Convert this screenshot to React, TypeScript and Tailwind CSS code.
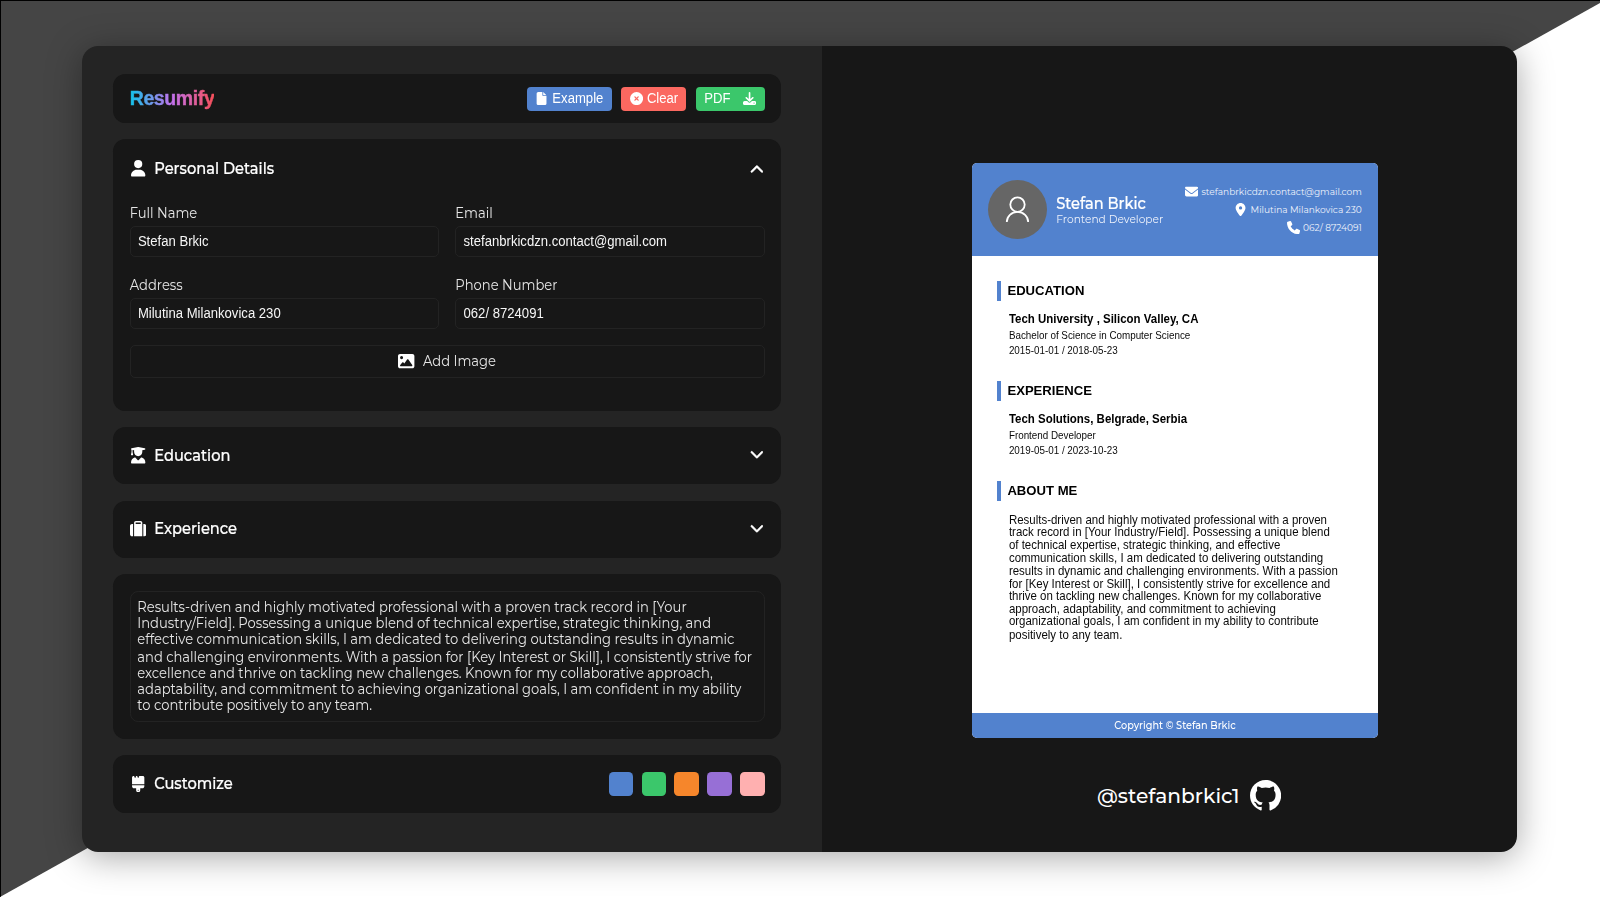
import type { ReactNode } from "react";
import {
  FaBrush,
  FaChevronDown,
  FaChevronUp,
  FaCircleXmark,
  FaDownload,
  FaEnvelope,
  FaFile,
  FaImage,
  FaLocationDot,
  FaPhone,
  FaSuitcase,
  FaUser,
  FaUserGraduate,
} from "react-icons/fa6";
import { BsGithub } from "react-icons/bs";

const ABOUT = [
  "Results-driven and highly motivated professional with a proven track record in [Your Industry/Field].",
  "Possessing a unique blend of technical expertise, strategic thinking, and effective communication skills,",
  "I am dedicated to delivering outstanding results in dynamic and challenging environments.",
  "With a passion for [Key Interest or Skill], I consistently strive for excellence and thrive on tackling new challenges.",
  "Known for my collaborative approach, adaptability, and commitment to achieving organizational goals,",
  "I am confident in my ability to contribute positively to any team.",
].join(" ");

const SWATCHES = [
  "bg-[#5282ce]",
  "bg-[#3bc76b]",
  "bg-[#f6862b]",
  "bg-[#976fd6]",
  "bg-[#ffb0b0]",
];

function Card({ className, children }: { className: string; children: ReactNode }) {
  return <section className={`rounded-[12.3px] bg-[#171717] px-[16.4px] ${className}`}>{children}</section>;
}

function Heading({ icon, title, trailing }: { icon: ReactNode; title: string; trailing?: ReactNode }) {
  return (
    <div className="flex h-[57.4px] items-center justify-between">
      <div className="flex items-center gap-[8.2px]">
        <span className="flex w-[16.4px] justify-center text-[16.4px] text-white">{icon}</span>
        <h2 className="mb-[1.6px] scale-y-[1.12] text-[14.65px] leading-[20px] font-medium text-white [-webkit-text-stroke:0.2px]">{title}</h2>
      </div>
      {trailing}
    </div>
  );
}

function Chevron({ open }: { open?: boolean }) {
  const Icon = open ? FaChevronUp : FaChevronDown;
  return (
    <Icon
      className={open ? "mt-[3px] mr-[1.2px] text-[13.8px] text-white" : "mr-[1.2px] mb-[2.6px] text-[13.8px] text-white"}
      stroke="currentColor"
      strokeWidth={20}
    />
  );
}

function Field({ label, value }: { label: string; value: string }) {
  return (
    <label className="flex flex-col">
      <span className="h-[21px] origin-center scale-y-[1.08] text-[13.12px] leading-[16.4px] text-[#e6e6e6]">{label}</span>
      <span className="flex h-[30.5px] items-center rounded-[5px] border border-[#232323] px-[7.2px] font-['Liberation_Sans',Arial,sans-serif] text-[13.12px] text-[#f6f6f6]">
        <span className="mt-[0.8px] scale-y-[1.07]">{value}</span>
      </span>
    </label>
  );
}

function Contact({ icon, text }: { icon: ReactNode; text: string }) {
  return (
    <div className="flex h-[18px] items-center">
      <span className="flex w-[16.4px] justify-center text-[13.12px] text-white">{icon}</span>
      <span className="mt-[0.8px] ml-[1.6px]">{text}</span>
    </div>
  );
}

function ResumeHeading({ children }: { children: ReactNode }) {
  return (
    <h3 className="flex h-5 items-center border-l-4 border-[#5282ce] pl-[6.8px] text-[13.12px] font-bold text-black">
      <span className="scale-y-[1.04]">{children}</span>
    </h3>
  );
}

function ResumeEntry({ title, place, role, dates }: { title: string; place: string; role: string; dates: string }) {
  return (
    <div className="mt-[10.6px] ml-[12.3px] h-[69.5px]">
      <p className="scale-y-[1.05] text-[11.48px] leading-[16.4px] font-bold text-black">{title}{place}</p>
      <p className="scale-y-[1.08] text-[9.84px] leading-[15.4px] text-[#0a0a0a]">{role}</p>
      <p className="scale-y-[1.08] text-[9.84px] leading-[15.4px] text-[#0a0a0a]">{dates}</p>
    </div>
  );
}

export default function App() {
  return (
    <div className="relative h-[900px] w-[1600px] overflow-hidden bg-white font-[Montserrat,Inter,sans-serif]">
      <div className="absolute inset-0 border-t border-l border-black bg-[#454545] [clip-path:polygon(0_0,1600px_0,1600px_3px,0_897px)]" />

      <main className="relative mt-[46px] ml-[82px] flex h-[806px] w-[1435px] rounded-[16px] shadow-[0_5px_35px_rgba(0,0,0,0.35)]">
        <div className="flex w-[740px] flex-col gap-[16.4px] rounded-l-[16px] bg-[#242424] pt-[28px] pr-[41px] pl-[31.3px]">
          <Card className="flex h-[49.2px] shrink-0 items-center justify-between">
            <h1 className="mb-[1.6px] bg-[linear-gradient(90deg,#12c2e9,#c471ed,#f64f59)] bg-clip-text font-['Liberation_Sans',Arial,sans-serif] text-[19.5px] leading-[24px] font-bold tracking-[-0.38px] text-transparent [-webkit-text-stroke:0.45px_transparent]">
              Resumify
            </h1>
            <div className="flex gap-[9.8px] font-['Liberation_Sans',Arial,sans-serif] text-[13.12px] text-white">
              <button className="flex h-[24px] w-[84.4px] items-center rounded-[4px] bg-[#5282ce] pl-[8.2px]">
                <FaFile className="text-[13.12px]" />
                <span className="mt-[0.6px] ml-[3.8px] scale-y-[1.07]">Example</span>
              </button>
              <button className="flex h-[24px] w-[64.8px] items-center gap-[4.2px] rounded-[4px] bg-[#fb6860] pl-[8.2px]">
                <FaCircleXmark className="text-[13.12px]" />
                <span className="mt-[0.6px] scale-y-[1.07]">Clear</span>
              </button>
              <button className="flex h-[24px] w-[68.6px] items-center justify-between rounded-[4px] bg-[#3bc76b] px-[8.2px]">
                <span className="mt-[0.6px] scale-y-[1.07]">PDF</span>
                <FaDownload className="text-[13.12px]" />
              </button>
            </div>
          </Card>

          <Card className="-mt-[0.2px] h-[271.4px] shrink-0 pt-[0.3px]">
            <Heading icon={<FaUser />} title="Personal Details" trailing={<Chevron open />} />
            <div className="mt-[8.3px] grid grid-cols-2 gap-x-[16.4px] gap-y-[20.5px]">
              <Field label="Full Name" value="Stefan Brkic" />
              <Field label="Email" value="stefanbrkicdzn.contact@gmail.com" />
              <Field label="Address" value="Milutina Milankovica 230" />
              <Field label="Phone Number" value="062/ 8724091" />
            </div>
            <button className="mt-[16.4px] flex h-[32.6px] w-full items-center justify-center gap-[8.2px] rounded-[5px] border border-[#232323] text-[13.12px] text-[#e6e6e6]">
              <FaImage className="text-[16.4px] text-white" />
              <span className="mt-[0.8px] scale-y-[1.08]">Add Image</span>
            </button>
          </Card>

          <Card className="-mt-[0.2px] shrink-0">
            <Heading icon={<FaUserGraduate />} title="Education" trailing={<Chevron />} />
          </Card>

          <Card className="-mt-[0.2px] shrink-0">
            <Heading icon={<FaSuitcase />} title="Experience" trailing={<Chevron />} />
          </Card>

          <Card className="h-[164.4px] shrink-0 py-[16.4px]">
            <div className="h-full rounded-[8.2px] border border-[#232323] px-[6.6px] pt-[6.8px]">
              <p className="origin-top scale-y-[1.08] text-[13.12px] leading-[15.2px] text-[#e6e6e6]">{ABOUT}</p>
            </div>
          </Card>

          <Card className="shrink-0">
            <Heading
              icon={<FaBrush />}
              title="Customize"
              trailing={
                <div className="flex gap-[8.2px]">
                  {SWATCHES.map((color) => (
                    <button key={color} className={`size-[24.6px] rounded-[4.5px] ${color}`} />
                  ))}
                </div>
              }
            />
          </Card>
        </div>

        <div className="flex flex-1 flex-col rounded-r-[16px] bg-[#171717] pt-[117px] pl-[150px]">
          <article className="flex h-[575px] w-[406.2px] flex-col overflow-hidden rounded-[5px] bg-white font-['Liberation_Sans',Arial,sans-serif]">
            <header className="flex h-[93px] shrink-0 items-center justify-between bg-[#5282ce] px-[16.4px] font-[Montserrat,Inter,sans-serif]">
              <div className="flex items-center gap-[8.8px]">
                <div className="mt-[0.6px] flex size-[59px] items-center justify-center rounded-full bg-[#666]">
                  <svg className="h-[27px] w-[25px]" viewBox="0 0 25 27" fill="none" stroke="white" strokeWidth="1.8">
                    <circle cx="12.5" cy="8.6" r="7.2" />
                    <path d="M1.8 26a10.7 10.2 0 0 1 21.4 0" />
                  </svg>
                </div>
                <div className="mt-[3.4px]">
                  <p className="scale-y-[1.1] text-[14.6px] leading-[17px] font-medium text-white [-webkit-text-stroke:0.2px]">Stefan Brkic</p>
                  <p className="scale-y-[0.96] text-[10.66px] leading-[14px] text-[#eef2fb]">Frontend Developer</p>
                </div>
              </div>
              <div className="mt-[0.6px] flex flex-col items-end text-[9.02px] text-[#eef2fb]">
                <Contact icon={<FaEnvelope />} text="stefanbrkicdzn.contact@gmail.com" />
                <Contact icon={<FaLocationDot />} text="Milutina Milankovica 230" />
                <Contact icon={<FaPhone />} text="062/ 8724091" />
              </div>
            </header>

            <div className="flex-1 pt-[24.8px] pl-[24.6px]">
              <ResumeHeading>EDUCATION</ResumeHeading>
              <ResumeEntry
                title="Tech University "
                place=", Silicon Valley, CA"
                role="Bachelor of Science in Computer Science"
                dates="2015-01-01 / 2018-05-23"
              />
              <ResumeHeading>EXPERIENCE</ResumeHeading>
              <ResumeEntry
                title="Tech Solutions"
                place=", Belgrade, Serbia"
                role="Frontend Developer"
                dates="2019-05-01 / 2023-10-23"
              />
              <ResumeHeading>ABOUT ME</ResumeHeading>
              <p className="mt-[12.2px] ml-[12.3px] w-[332px] origin-top scale-y-[1.05] text-[11.48px] leading-[12.17px] text-[#0a0a0a]">
                {ABOUT}
              </p>
            </div>

            <footer className="flex h-[24.6px] shrink-0 items-center justify-center bg-[#5282ce] pt-[1.2px] font-[Montserrat,Inter,sans-serif] text-[9.72px] font-medium text-white">
              <span className="scale-y-[1.07]">Copyright © Stefan Brkic</span>
            </footer>
          </article>

          <div className="mt-[41px] flex h-[33px] items-center gap-[10px] pl-[125px] text-white">
            <span className="mt-[1.4px] text-[20.2px] font-medium">@stefanbrkic1</span>
            <BsGithub className="text-[31.2px]" />
          </div>
        </div>
      </main>
    </div>
  );
}
